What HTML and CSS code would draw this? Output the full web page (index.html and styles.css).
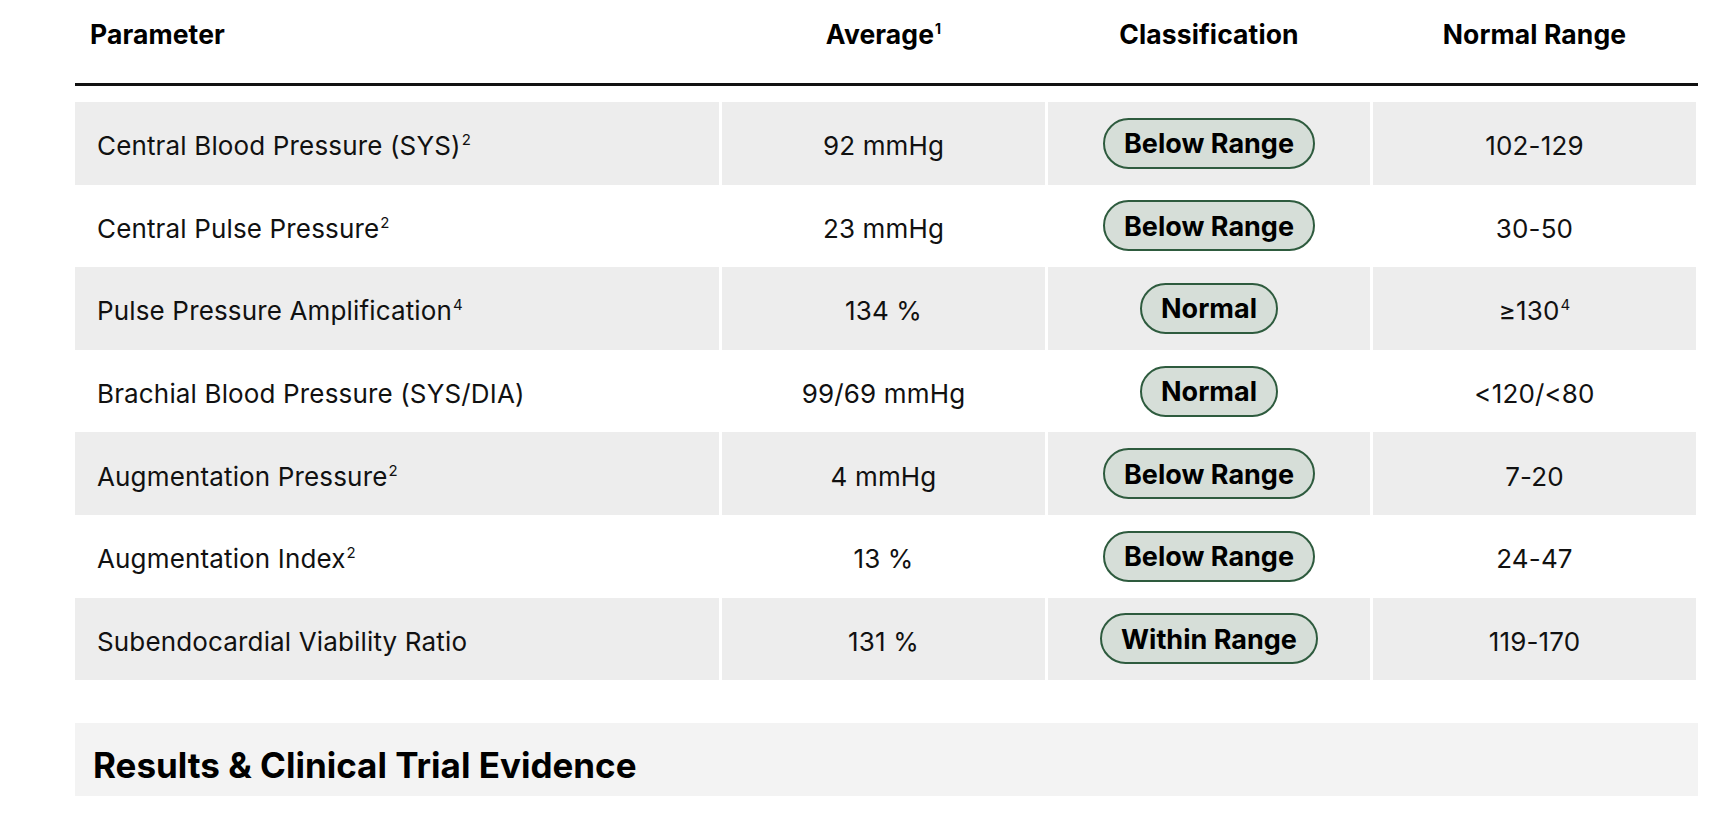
FILE: index.html
```html
<!DOCTYPE html>
<html lang="en">
<head>
<meta charset="utf-8">
<title>Parameters</title>
<link rel="stylesheet" href="styles.css">
</head>
<body>
<div class="page">
  <div class="table">
    <div class="thead">
      <div class="th th-left">Parameter</div>
      <div class="th">Average<sup>1</sup></div>
      <div class="th">Classification</div>
      <div class="th">Normal Range</div>
    </div>
    <div class="tbody">
      <div class="tr shade">
        <div class="td td-left"><span class="txt">Central Blood Pressure (SYS)<sup>2</sup></span></div>
        <div class="td"><span class="txt">92 mmHg</span></div>
        <div class="td"><span class="pill">Below Range</span></div>
        <div class="td"><span class="txt">102-129</span></div>
      </div>
      <div class="tr">
        <div class="td td-left"><span class="txt">Central Pulse Pressure<sup>2</sup></span></div>
        <div class="td"><span class="txt">23 mmHg</span></div>
        <div class="td"><span class="pill">Below Range</span></div>
        <div class="td"><span class="txt">30-50</span></div>
      </div>
      <div class="tr shade">
        <div class="td td-left"><span class="txt">Pulse Pressure Amplification<sup>4</sup></span></div>
        <div class="td"><span class="txt">134 %</span></div>
        <div class="td"><span class="pill">Normal</span></div>
        <div class="td"><span class="txt">≥130<sup>4</sup></span></div>
      </div>
      <div class="tr">
        <div class="td td-left"><span class="txt">Brachial Blood Pressure (SYS/DIA)</span></div>
        <div class="td"><span class="txt">99/69 mmHg</span></div>
        <div class="td"><span class="pill">Normal</span></div>
        <div class="td"><span class="txt">&lt;120/&lt;80</span></div>
      </div>
      <div class="tr shade">
        <div class="td td-left"><span class="txt">Augmentation Pressure<sup>2</sup></span></div>
        <div class="td"><span class="txt">4 mmHg</span></div>
        <div class="td"><span class="pill">Below Range</span></div>
        <div class="td"><span class="txt">7-20</span></div>
      </div>
      <div class="tr">
        <div class="td td-left"><span class="txt">Augmentation Index<sup>2</sup></span></div>
        <div class="td"><span class="txt">13 %</span></div>
        <div class="td"><span class="pill">Below Range</span></div>
        <div class="td"><span class="txt">24-47</span></div>
      </div>
      <div class="tr shade">
        <div class="td td-left"><span class="txt">Subendocardial Viability Ratio</span></div>
        <div class="td"><span class="txt">131 %</span></div>
        <div class="td"><span class="pill">Within Range</span></div>
        <div class="td"><span class="txt">119-170</span></div>
      </div>
    </div>
  </div>
  <div class="section-head">
    <h2 class="section-title">Results &amp; Clinical Trial Evidence</h2>
  </div>
</div>
</body>
</html>
```
FILE: styles.css
```css
* { box-sizing: border-box; }
html, body { margin: 0; padding: 0; background: #ffffff; }
body {
  font-family: Inter, "Liberation Sans", Arial, sans-serif;
  color: #111111;
}
.page {
  margin-left: 75px;
  width: 1623px;
}
.thead, .tr {
  display: grid;
  grid-template-columns: 644px 323px 322px 323px;
  column-gap: 3px;
}
.thead {
  height: 86px;
  border-bottom: 3px solid #111111;
}
.th {
  font-size: 26.5px;
  font-weight: 700;
  color: #000000;
  text-align: center;
  padding-top: 18px;
  line-height: 32px;
  letter-spacing: 0.1px;
}
.th-left { text-align: left; padding-left: 15px; }
.th sup { font-size: 14px; vertical-align: 10px; line-height: 0; margin-left: 1px; }
.tbody { margin-top: 16px; }
.tr { height: 82.6px; }
.td {
  display: flex;
  align-items: center;
  justify-content: center;
  font-size: 26px;
  line-height: 32px;
}
.txt {
  padding-top: 6px;
  letter-spacing: 0.15px;
}
.td-left { justify-content: flex-start; padding-left: 22px; }
.tr.shade .td { background: #ededed; }
.txt sup { font-size: 15px; line-height: 0; vertical-align: 10px; margin-left: 1px; }
.pill {
  display: inline-flex;
  align-items: center;
  height: 51px;
  padding: 2px 19px 0;
  border: 2px solid #2e5b3e;
  border-radius: 26px;
  background: #d6ded8;
  font-weight: 700;
  font-size: 27px;
  color: #000000;
  letter-spacing: 0;
}
.section-head {
  margin-top: 43px;
  height: 73px;
  background: #f3f3f3;
  display: flex;
  align-items: center;
  padding-left: 18px;
  padding-top: 10px;
}
.section-title {
  margin: 0;
  font-size: 35px;
  font-weight: 700;
  color: #000000;
  letter-spacing: 0;
}
```
